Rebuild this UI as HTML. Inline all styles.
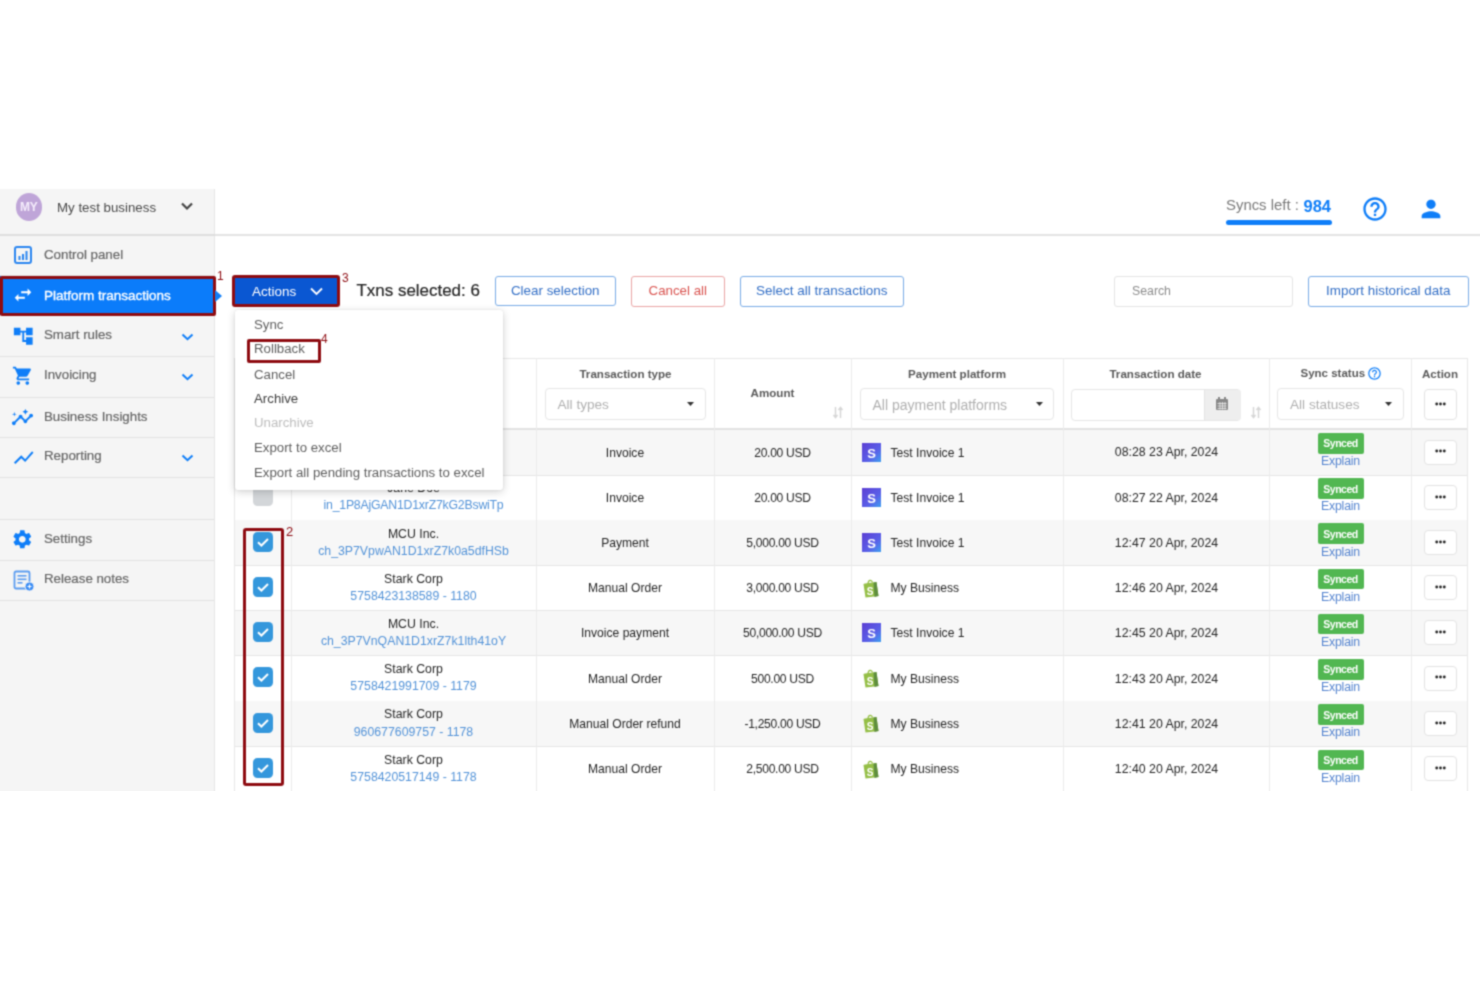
<!DOCTYPE html>
<html><head><meta charset="utf-8"><title>Platform transactions</title>
<style>
html,body{margin:0;padding:0;background:#fff;}
body{width:1480px;height:987px;position:relative;overflow:hidden;font-family:"Liberation Sans", sans-serif;}
#clip{position:absolute;left:0;top:0;width:1480px;height:790.6px;overflow:hidden;filter:url(#sb);background:#fff;}
.t{position:absolute;white-space:nowrap;line-height:1;}
.b{position:absolute;}
svg.b{overflow:visible;}
</style></head><body><svg width="0" height="0" style="position:absolute"><filter id="sb" x="0" y="0" width="100%" height="100%" color-interpolation-filters="sRGB"><feConvolveMatrix order="3" kernelMatrix="0.04 0.12 0.04 0.12 0.36 0.12 0.04 0.12 0.04" edgeMode="duplicate"/></filter></svg><div id="clip">
<div class="b" style="left:0px;top:188.5px;width:215px;height:602.5px;background:#f5f5f5;border-right:1px solid #e6e6e6;box-sizing:border-box"></div>
<div class="b" style="left:0px;top:234px;width:215px;height:1.5px;background:#dedede"></div>
<div class="b" style="left:215px;top:234px;width:1265px;height:1.5px;background:#e3e3e3"></div>
<div class="b" style="left:15.5px;top:193.2px;width:26.5px;height:27.600000000000023px;background:#bfa5d8;border-radius:50%"></div>
<div class="t" style="left:-271.2px;width:600px;text-align:center;top:200.84px;font-size:12px;color:#f4ecfb;font-weight:700;letter-spacing:-0.3px">MY</div>
<div class="t" style="left:57px;top:200.64px;font-size:13.3px;color:#4a4a4a;font-weight:400;">My test business</div>
<svg class="b" style="left:180px;top:201px" width="14" height="10" viewBox="0 0 14 10"><path d="M2 2.5 L7 7.5 L12 2.5" fill="none" stroke="#444" stroke-width="2.2"/></svg>
<div class="b" style="left:0px;top:274.5px;width:214px;height:1.0px;background:#e2e2e2"></div>
<div class="b" style="left:0px;top:315.0px;width:214px;height:1.0px;background:#e2e2e2"></div>
<div class="b" style="left:0px;top:355.5px;width:214px;height:1.0px;background:#e2e2e2"></div>
<div class="b" style="left:0px;top:396.5px;width:214px;height:1.0px;background:#e2e2e2"></div>
<div class="b" style="left:0px;top:436.5px;width:214px;height:1.0px;background:#e2e2e2"></div>
<div class="b" style="left:0px;top:477.0px;width:214px;height:1.0px;background:#e2e2e2"></div>
<div class="b" style="left:0px;top:518.5px;width:214px;height:1.0px;background:#e2e2e2"></div>
<div class="b" style="left:0px;top:559.5px;width:214px;height:1.0px;background:#e2e2e2"></div>
<div class="b" style="left:0px;top:599.5px;width:214px;height:1.0px;background:#e2e2e2"></div>
<div class="b" style="left:0px;top:276px;width:214px;height:39px;background:#0b7cfa"></div>
<div class="b" style="left:0px;top:275.5px;width:216px;height:40.19999999999999px;border:3px solid #8e0c12;border-radius:2px;box-sizing:border-box"></div>
<div class="t" style="left:217px;top:270.34px;font-size:12px;color:#8e0c12;font-weight:400;">1</div>
<svg class="b" style="left:215px;top:290px" width="8" height="12" viewBox="0 0 8 12"><path d="M0 0 L7 6 L0 12z" fill="#0f7ef8"/></svg>
<div class="t" style="left:44px;top:248.24px;font-size:13.3px;color:#666;font-weight:400;-webkit-text-stroke:0.2px #666">Control panel</div>
<div class="t" style="left:44px;top:288.87px;font-size:13.5px;color:#fff;font-weight:400;-webkit-text-stroke:0.35px #fff">Platform transactions</div>
<div class="t" style="left:44px;top:328.24px;font-size:13.3px;color:#666;font-weight:400;-webkit-text-stroke:0.2px #666">Smart rules</div>
<div class="t" style="left:44px;top:368.44px;font-size:13.3px;color:#666;font-weight:400;-webkit-text-stroke:0.2px #666">Invoicing</div>
<div class="t" style="left:44px;top:410.04px;font-size:13.3px;color:#666;font-weight:400;-webkit-text-stroke:0.2px #666">Business Insights</div>
<div class="t" style="left:44px;top:449.44px;font-size:13.3px;color:#666;font-weight:400;-webkit-text-stroke:0.2px #666">Reporting</div>
<div class="t" style="left:44px;top:532.34px;font-size:13.3px;color:#666;font-weight:400;-webkit-text-stroke:0.2px #666">Settings</div>
<div class="t" style="left:44px;top:572.44px;font-size:13.3px;color:#666;font-weight:400;-webkit-text-stroke:0.2px #666">Release notes</div>
<svg class="b" style="left:13px;top:245px" width="20" height="20" viewBox="0 0 20 20"><rect x="2" y="2" width="16" height="16" rx="2" fill="none" stroke="#2b86f0" stroke-width="2"/><rect x="5.5" y="11" width="2" height="4" fill="#2b86f0"/><rect x="9" y="9" width="2" height="6" fill="#2b86f0"/><rect x="12.5" y="6" width="2" height="9" fill="#2b86f0"/></svg>
<svg class="b" style="left:12px;top:284px" width="22" height="22" viewBox="0 0 24 24"><path d="M6.99 11L3 15l3.99 4v-3H14v-2H6.99v-3zM21 9l-3.99-4v3H10v2h7.01v3L21 9z" fill="#fff"/></svg>
<svg class="b" style="left:12px;top:325px" width="22.5" height="22.5" viewBox="0 0 24 24"><path d="M22 11V3h-7v3H9V3H2v8h7V8h2v10h4v3h7v-8h-7v3h-2V8h2v3z" fill="#0f7ef8"/></svg>
<svg class="b" style="left:12px;top:365px" width="21.6" height="21.6" viewBox="0 0 24 24"><path d="M7 18c-1.1 0-1.99.9-1.99 2S5.9 22 7 22s2-.9 2-2-.9-2-2-2zM1 2v2h2l3.6 7.59-1.35 2.45c-.16.28-.25.61-.25.96 0 1.1.9 2 2 2h12v-2H7.42c-.14 0-.25-.11-.25-.25l.03-.12.9-1.63h7.45c.75 0 1.41-.41 1.75-1.03l3.58-6.49c.08-.14.12-.31.12-.48 0-.55-.45-1-1-1H5.21l-.94-2H1zm16 16c-1.1 0-1.99.9-1.99 2s.89 2 1.99 2 2-.9 2-2-.9-2-2-2z" fill="#0f7ef8"/></svg>
<svg class="b" style="left:11.1px;top:406.3px" width="23" height="23" viewBox="0 0 24 24"><path d="M21 8c-1.45 0-2.26 1.44-1.93 2.51l-3.55 3.56c-.3-.09-.74-.09-1.04 0l-2.55-2.55C12.27 10.45 11.46 9 10 9c-1.45 0-2.27 1.44-1.93 2.52l-4.56 4.55C2.44 15.74 1 16.55 1 18c0 1.1.9 2 2 2 1.45 0 2.26-1.44 1.93-2.51l4.55-4.56c.3.09.74.09 1.04 0l2.55 2.55C12.73 16.55 13.54 18 15 18c1.45 0 2.27-1.44 1.93-2.52l3.56-3.55c1.07.33 2.51-.48 2.51-1.93 0-1.1-.9-2-2-2z" fill="#0f7ef8"/><path d="M15 9l.94-2.07L18 6l-2.06-.93L15 3l-.92 2.07L12 6l2.08.93zM3.5 11L4 9l2-.5L4 8l-.5-2L3 8l-2 .5L3 9z" fill="#0f7ef8"/></svg>
<svg class="b" style="left:12px;top:445.6px" width="23.4" height="23.4" viewBox="0 0 24 24"><path d="M3.5 18.49l6-6.01 4 4L22 6.92l-1.41-1.41-7.09 7.97-4-4L2 16.99z" fill="#0f7ef8"/></svg>
<svg class="b" style="left:11px;top:528.2px" width="22.6" height="22.6" viewBox="0 0 24 24"><path d="M19.14 12.94c.04-.3.06-.61.06-.94 0-.32-.02-.64-.07-.94l2.03-1.58c.18-.14.23-.41.12-.61l-1.92-3.32c-.12-.22-.37-.29-.59-.22l-2.39.96c-.5-.38-1.03-.7-1.62-.94l-.36-2.54c-.04-.24-.24-.41-.48-.41h-3.84c-.24 0-.43.17-.47.41l-.36 2.54c-.59.24-1.13.57-1.620.94l-2.39-.96c-.22-.08-.47 0-.59.22L2.74 8.87c-.12.21-.08.47.12.61l2.03 1.58c-.05.3-.09.63-.09.94s.02.64.07.94l-2.03 1.58c-.18.14-.23.41-.12.61l1.92 3.32c.12.22.37.29.59.22l2.39-.96c.5.38 1.03.7 1.62.94l.36 2.54c.05.24.24.41.48.41h3.84c.24 0 .44-.17.47-.41l.36-2.54c.59-.24 1.13-.56 1.62-.94l2.39.96c.22.08.47 0 .59-.22l1.92-3.32c.12-.22.07-.47-.12-.61l-2.01-1.58zM12 15.6c-1.98 0-3.6-1.62-3.6-3.6s1.62-3.6 3.6-3.6 3.6 1.62 3.6 3.6-1.62 3.6-3.6 3.6z" fill="#0f7ef8"/></svg>
<svg class="b" style="left:13px;top:570px" width="22" height="22" viewBox="0 0 22 22"><rect x="1.5" y="1.5" width="15" height="17" rx="1.5" fill="none" stroke="#5b9cf0" stroke-width="1.8"/><rect x="4.5" y="5" width="9" height="1.6" fill="#5b9cf0"/><rect x="4.5" y="8.5" width="9" height="1.6" fill="#5b9cf0"/><rect x="4.5" y="12" width="5" height="1.6" fill="#5b9cf0"/><circle cx="16.5" cy="16.5" r="4.5" fill="#3d8ef5" stroke="#f5f5f5" stroke-width="1"/><path d="M14.5 16.5h4M16.5 14.5v4" stroke="#fff" stroke-width="1.2"/></svg>
<svg class="b" style="left:181px;top:333px" width="13" height="8" viewBox="0 0 13 8"><path d="M1.5 1.5 L6.5 6.2 L11.5 1.5" fill="none" stroke="#0f7ef8" stroke-width="2"/></svg>
<svg class="b" style="left:181px;top:372.5px" width="13" height="8" viewBox="0 0 13 8"><path d="M1.5 1.5 L6.5 6.2 L11.5 1.5" fill="none" stroke="#0f7ef8" stroke-width="2"/></svg>
<svg class="b" style="left:181px;top:453.5px" width="13" height="8" viewBox="0 0 13 8"><path d="M1.5 1.5 L6.5 6.2 L11.5 1.5" fill="none" stroke="#0f7ef8" stroke-width="2"/></svg>
<div class="t" style="left:1226px;top:198.39px;font-size:14.9px;color:#7a7a7a;font-weight:400;">Syncs left :</div>
<div class="t" style="left:1303.5px;top:198.03px;font-size:16.5px;color:#0f7ef8;font-weight:700;">984</div>
<div class="b" style="left:1226px;top:220px;width:105.5px;height:4.5px;background:#0f7ef8;border-radius:3px"></div>
<svg class="b" style="left:1360.5px;top:194.8px" width="28" height="28" viewBox="0 0 24 24"><path d="M11 18h2v-2h-2v2zm1-16C6.48 2 2 6.48 2 12s4.48 10 10 10 10-4.48 10-10S17.52 2 12 2zm0 18c-4.41 0-8-3.59-8-8s3.59-8 8-8 8 3.59 8 8-3.59 8-8 8zm0-14c-2.21 0-4 1.79-4 4h2c0-1.1.9-2 2-2s2 .9 2 2c0 2-3 1.75-3 5h2c0-2.25 3-2.5 3-5 0-2.21-1.79-4-4-4z" fill="#0f7ef8"/></svg>
<svg class="b" style="left:1417px;top:194.6px" width="28" height="28" viewBox="0 0 24 24"><path d="M12 12c2.21 0 4-1.79 4-4s-1.79-4-4-4-4 1.79-4 4 1.79 4 4 4zm0 2c-2.67 0-8 1.34-8 4v2h16v-2c0-2.66-5.33-4-8-4z" fill="#0f7ef8"/></svg>
<div class="b" style="left:234px;top:277.3px;width:104.5px;height:28.19999999999999px;background:#0a57d2"></div>
<div class="b" style="left:232px;top:275.3px;width:108.30000000000001px;height:32.0px;border:3px solid #8e0c12;border-radius:3px;box-sizing:border-box"></div>
<div class="t" style="left:252px;top:284.57px;font-size:13.5px;color:#fff;font-weight:400;">Actions</div>
<svg class="b" style="left:309px;top:286px" width="15" height="11" viewBox="0 0 15 11"><path d="M2 2.5 L7.5 8 L13 2.5" fill="none" stroke="#fff" stroke-width="1.8"/></svg>
<div class="t" style="left:342px;top:271.84px;font-size:12px;color:#8e0c12;font-weight:400;">3</div>
<div class="t" style="left:356.5px;top:282.95px;font-size:16.95px;color:#262626;font-weight:400;-webkit-text-stroke:0.2px #262626">Txns selected: 6</div>
<div class="b" style="left:494.5px;top:276px;width:121.5px;height:30px;border:1px solid #7aace6;border-radius:3px;box-sizing:border-box;background:#fff"></div><div class="t" style="left:255.25px;width:600px;text-align:center;top:284.16px;font-size:13.4px;color:#336fc6;font-weight:400;">Clear selection</div>
<div class="b" style="left:631px;top:276px;width:93.5px;height:30.5px;border:1px solid #eaa5a5;border-radius:3px;box-sizing:border-box;background:#fff"></div><div class="t" style="left:377.75px;width:600px;text-align:center;top:284.24px;font-size:13.3px;color:#d9534f;font-weight:400;">Cancel all</div>
<div class="b" style="left:739.5px;top:276px;width:164.5px;height:30.5px;border:1px solid #7aace6;border-radius:3px;box-sizing:border-box;background:#fff"></div><div class="t" style="left:521.75px;width:600px;text-align:center;top:284.07px;font-size:13.5px;color:#336fc6;font-weight:400;">Select all transactions</div>
<div class="b" style="left:1114px;top:276px;width:178.5px;height:30.5px;border:1px solid #e4e4e4;border-radius:3px;box-sizing:border-box;background:#fff"></div>
<div class="t" style="left:1132px;top:285.09px;font-size:12.3px;color:#8c8c8c;font-weight:400;">Search</div>
<div class="b" style="left:1307.5px;top:276px;width:161.5px;height:30.5px;border:1px solid #7aace6;border-radius:3px;box-sizing:border-box;background:#fff"></div><div class="t" style="left:1088.25px;width:600px;text-align:center;top:284.16px;font-size:13.4px;color:#336fc6;font-weight:400;">Import historical data</div>
<div class="b" style="left:234px;top:357.5px;width:1233.5px;height:442.5px;background:#fff;border:1px solid #e8e8e8;box-sizing:border-box"></div>
<div class="b" style="left:234.5px;top:429.8px;width:1232.5px;height:45.21999999999997px;background:#f7f7f7"></div>
<div class="b" style="left:234.5px;top:474.52px;width:1232.5px;height:1.0px;background:#e6e6e6"></div>
<div class="b" style="left:234.5px;top:519.74px;width:1232.5px;height:1.0px;background:#e6e6e6"></div>
<div class="b" style="left:234.5px;top:520.24px;width:1232.5px;height:45.22000000000003px;background:#f7f7f7"></div>
<div class="b" style="left:234.5px;top:564.96px;width:1232.5px;height:1.0px;background:#e6e6e6"></div>
<div class="b" style="left:234.5px;top:610.1800000000001px;width:1232.5px;height:1.0px;background:#e6e6e6"></div>
<div class="b" style="left:234.5px;top:610.6800000000001px;width:1232.5px;height:45.22000000000003px;background:#f7f7f7"></div>
<div class="b" style="left:234.5px;top:655.4000000000001px;width:1232.5px;height:1.0px;background:#e6e6e6"></div>
<div class="b" style="left:234.5px;top:700.62px;width:1232.5px;height:1.0px;background:#e6e6e6"></div>
<div class="b" style="left:234.5px;top:701.12px;width:1232.5px;height:45.22000000000003px;background:#f7f7f7"></div>
<div class="b" style="left:234.5px;top:745.84px;width:1232.5px;height:1.0px;background:#e6e6e6"></div>
<div class="b" style="left:234.5px;top:791.06px;width:1232.5px;height:1.0px;background:#e6e6e6"></div>
<div class="b" style="left:234.5px;top:427.5px;width:1232.5px;height:2.3000000000000114px;background:#e2e2e2"></div>
<div class="b" style="left:290.5px;top:357.5px;width:1.0px;height:442.5px;background:#ebebeb"></div>
<div class="b" style="left:536.0px;top:357.5px;width:1.0px;height:442.5px;background:#ebebeb"></div>
<div class="b" style="left:713.5px;top:357.5px;width:1.0px;height:442.5px;background:#ebebeb"></div>
<div class="b" style="left:850.5px;top:357.5px;width:1.0px;height:442.5px;background:#ebebeb"></div>
<div class="b" style="left:1063.0px;top:357.5px;width:1.0px;height:442.5px;background:#ebebeb"></div>
<div class="b" style="left:1268.5px;top:357.5px;width:1.0px;height:442.5px;background:#ebebeb"></div>
<div class="b" style="left:1410.5px;top:357.5px;width:1.0px;height:442.5px;background:#ebebeb"></div>
<div class="t" style="left:325.5px;width:600px;text-align:center;top:368.38px;font-size:11.6px;color:#5a5a5a;font-weight:700;">Transaction type</div>
<div class="t" style="left:472.5px;width:600px;text-align:center;top:386.98px;font-size:11.6px;color:#5a5a5a;font-weight:700;">Amount</div>
<div class="t" style="left:657px;width:600px;text-align:center;top:368.38px;font-size:11.6px;color:#5a5a5a;font-weight:700;">Payment platform</div>
<div class="t" style="left:855.5px;width:600px;text-align:center;top:368.38px;font-size:11.6px;color:#5a5a5a;font-weight:700;">Transaction date</div>
<div class="t" style="left:1300.5px;top:368.47px;font-size:11.5px;color:#5a5a5a;font-weight:700;">Sync status</div>
<svg class="b" style="left:1367.3px;top:366px" width="15" height="15" viewBox="0 0 24 24"><path d="M11 18h2v-2h-2v2zm1-16C6.48 2 2 6.48 2 12s4.48 10 10 10 10-4.48 10-10S17.52 2 12 2zm0 18c-4.41 0-8-3.59-8-8s3.59-8 8-8 8 3.59 8 8-3.59 8-8 8zm0-14c-2.21 0-4 1.79-4 4h2c0-1.1.9-2 2-2s2 .9 2 2c0 2-3 1.75-3 5h2c0-2.25 3-2.5 3-5 0-2.21-1.79-4-4-4z" fill="#0f7ef8"/></svg>
<div class="t" style="left:1140px;width:600px;text-align:center;top:368.38px;font-size:11.6px;color:#5a5a5a;font-weight:700;">Action</div>
<div class="b" style="left:544.5px;top:388px;width:161.0px;height:32.30000000000001px;border:1px solid #e6e6e6;border-radius:4px;box-sizing:border-box;background:#fff"></div><div class="t" style="left:557.5px;top:398.09px;font-size:13.6px;color:#b0b0b0;font-weight:400;">All types</div><svg class="b" style="left:687.0px;top:401.8px" width="7" height="4.5" viewBox="0 0 7 4.5"><path d="M0 0 L7 0 L3.5 4z" fill="#333"/></svg>
<div class="b" style="left:859.5px;top:388px;width:194.5px;height:32.30000000000001px;border:1px solid #e6e6e6;border-radius:4px;box-sizing:border-box;background:#fff"></div><div class="t" style="left:872.5px;top:397.75px;font-size:14px;color:#b0b0b0;font-weight:400;">All payment platforms</div><svg class="b" style="left:1035.5px;top:401.8px" width="7" height="4.5" viewBox="0 0 7 4.5"><path d="M0 0 L7 0 L3.5 4z" fill="#333"/></svg>
<div class="b" style="left:1277px;top:388px;width:126.5px;height:32.30000000000001px;border:1px solid #e6e6e6;border-radius:4px;box-sizing:border-box;background:#fff"></div><div class="t" style="left:1290px;top:398.09px;font-size:13.6px;color:#b0b0b0;font-weight:400;">All statuses</div><svg class="b" style="left:1385.0px;top:401.8px" width="7" height="4.5" viewBox="0 0 7 4.5"><path d="M0 0 L7 0 L3.5 4z" fill="#333"/></svg>
<div class="b" style="left:1071px;top:388.5px;width:169.5px;height:32.0px;border:1px solid #e6e6e6;border-radius:4px;box-sizing:border-box;background:#fff;overflow:hidden"></div>
<div class="b" style="left:1204px;top:389.5px;width:35.5px;height:30.0px;background:#eeeeee;border-left:1px solid #e3e3e3;border-radius:0 3px 3px 0"></div>
<svg class="b" style="left:1215px;top:396px" width="14" height="15" viewBox="0 0 14 15"><rect x="1" y="3" width="12" height="11" rx="1" fill="#888"/><rect x="3" y="1" width="2" height="3" fill="#888"/><rect x="9" y="1" width="2" height="3" fill="#888"/><path d="M2.5 7.5h9M2.5 10h9M2.5 12.5h9M5 6v7.5M7.5 6v7.5M10 6v7.5" stroke="#eee" stroke-width="0.8"/></svg>
<svg class="b" style="left:832px;top:406px" width="12" height="13" viewBox="0 0 12 13"><path d="M3.5 1v10M1.5 9l2 2.5 2-2.5M8.5 12V2M6.5 4l2-2.5 2 2.5" fill="none" stroke="#d6d6d6" stroke-width="1.5"/></svg>
<svg class="b" style="left:1249.5px;top:406px" width="12" height="13" viewBox="0 0 12 13"><path d="M3.5 1v10M1.5 9l2 2.5 2-2.5M8.5 12V2M6.5 4l2-2.5 2 2.5" fill="none" stroke="#d6d6d6" stroke-width="1.5"/></svg>
<div class="b" style="left:1423.5px;top:389.0px;width:33.0px;height:31.0px;border:1px solid #e3e3e3;border-radius:4px;box-sizing:border-box;background:#fff"></div><svg class="b" style="left:1434.5px;top:401.8px" width="11" height="4" viewBox="0 0 11 4"><circle cx="1.7" cy="2" r="1.4" fill="#222"/><circle cx="5.5" cy="2" r="1.4" fill="#222"/><circle cx="9.3" cy="2" r="1.4" fill="#222"/></svg>
<div class="t" style="left:325px;width:600px;text-align:center;top:446.57px;font-size:12.1px;color:#262626;font-weight:400;">Invoice</div>
<div class="t" style="left:482.5px;width:600px;text-align:center;top:446.57px;font-size:12.1px;color:#262626;font-weight:400;letter-spacing:-0.3px">20.00 USD</div>
<svg class="b" style="left:861.5px;top:442.51000000000005px" width="19" height="19" viewBox="0 0 19 19"><defs><linearGradient id="sg" x1="0" y1="0" x2="1" y2="1"><stop offset="0" stop-color="#5d3fd3"/><stop offset="0.6" stop-color="#5a5fe8"/><stop offset="1" stop-color="#3fa0f0"/></linearGradient></defs><rect width="19" height="19" fill="url(#sg)"/><text x="9.5" y="14.5" text-anchor="middle" font-family="Liberation Sans" font-weight="700" font-size="13" fill="#fff">S</text></svg>
<div class="t" style="left:890.5px;top:446.57px;font-size:12.1px;color:#262626;font-weight:400;">Test Invoice 1</div>
<div class="t" style="left:866.5px;width:600px;text-align:center;top:446.40px;font-size:12.3px;color:#262626;font-weight:400;">08:28 23 Apr, 2024</div>
<div class="b" style="left:1317.5px;top:433.01000000000005px;width:46.0px;height:20.5px;background:#52b752;border-radius:2px"></div>
<div class="t" style="left:1040.5px;width:600px;text-align:center;top:438.32px;font-size:10.5px;color:#fff;font-weight:700;letter-spacing:-0.5px">Synced</div>
<div class="t" style="left:1040.5px;width:600px;text-align:center;top:455.10px;font-size:12.3px;color:#5685d0;font-weight:400;letter-spacing:-0.2px">Explain</div>
<div class="b" style="left:1423.5px;top:439.51000000000005px;width:33.0px;height:25.0px;border:1px solid #e3e3e3;border-radius:4px;box-sizing:border-box;background:#fff"></div><svg class="b" style="left:1434.5px;top:449.31000000000006px" width="11" height="4" viewBox="0 0 11 4"><circle cx="1.7" cy="2" r="1.4" fill="#222"/><circle cx="5.5" cy="2" r="1.4" fill="#222"/><circle cx="9.3" cy="2" r="1.4" fill="#222"/></svg>
<div class="b" style="left:252.5px;top:485.73px;width:20.0px;height:20.0px;background:#d3d6d9;border-radius:4.5px"></div>
<div class="t" style="left:113.5px;width:600px;text-align:center;top:482.32px;font-size:12.3px;color:#262626;font-weight:400;">Jane Doe</div>
<div class="t" style="left:113.5px;width:600px;text-align:center;top:499.42px;font-size:12.3px;color:#5393d8;font-weight:400;letter-spacing:-0.22px">in_1P8AjGAN1D1xrZ7kG2BswiTp</div>
<div class="t" style="left:325px;width:600px;text-align:center;top:491.79px;font-size:12.1px;color:#262626;font-weight:400;">Invoice</div>
<div class="t" style="left:482.5px;width:600px;text-align:center;top:491.79px;font-size:12.1px;color:#262626;font-weight:400;letter-spacing:-0.3px">20.00 USD</div>
<svg class="b" style="left:861.5px;top:487.73px" width="19" height="19" viewBox="0 0 19 19"><defs><linearGradient id="sg" x1="0" y1="0" x2="1" y2="1"><stop offset="0" stop-color="#5d3fd3"/><stop offset="0.6" stop-color="#5a5fe8"/><stop offset="1" stop-color="#3fa0f0"/></linearGradient></defs><rect width="19" height="19" fill="url(#sg)"/><text x="9.5" y="14.5" text-anchor="middle" font-family="Liberation Sans" font-weight="700" font-size="13" fill="#fff">S</text></svg>
<div class="t" style="left:890.5px;top:491.79px;font-size:12.1px;color:#262626;font-weight:400;">Test Invoice 1</div>
<div class="t" style="left:866.5px;width:600px;text-align:center;top:491.62px;font-size:12.3px;color:#262626;font-weight:400;">08:27 22 Apr, 2024</div>
<div class="b" style="left:1317.5px;top:478.23px;width:46.0px;height:20.5px;background:#52b752;border-radius:2px"></div>
<div class="t" style="left:1040.5px;width:600px;text-align:center;top:483.54px;font-size:10.5px;color:#fff;font-weight:700;letter-spacing:-0.5px">Synced</div>
<div class="t" style="left:1040.5px;width:600px;text-align:center;top:500.32px;font-size:12.3px;color:#5685d0;font-weight:400;letter-spacing:-0.2px">Explain</div>
<div class="b" style="left:1423.5px;top:484.73px;width:33.0px;height:25.0px;border:1px solid #e3e3e3;border-radius:4px;box-sizing:border-box;background:#fff"></div><svg class="b" style="left:1434.5px;top:494.53000000000003px" width="11" height="4" viewBox="0 0 11 4"><circle cx="1.7" cy="2" r="1.4" fill="#222"/><circle cx="5.5" cy="2" r="1.4" fill="#222"/><circle cx="9.3" cy="2" r="1.4" fill="#222"/></svg>
<svg class="b" style="left:252.7px;top:531.75px" width="20" height="20" viewBox="0 0 20 20"><rect width="20" height="20" rx="4.5" fill="#3497dc"/><path d="M5 10.3 L8.4 13.5 L15 7" fill="none" stroke="#fff" stroke-width="2"/></svg>
<div class="t" style="left:113.5px;width:600px;text-align:center;top:527.54px;font-size:12.3px;color:#262626;font-weight:400;">MCU Inc.</div>
<div class="t" style="left:113.5px;width:600px;text-align:center;top:544.64px;font-size:12.3px;color:#5393d8;font-weight:400;">ch_3P7VpwAN1D1xrZ7k0a5dfHSb</div>
<div class="t" style="left:325px;width:600px;text-align:center;top:537.01px;font-size:12.1px;color:#262626;font-weight:400;">Payment</div>
<div class="t" style="left:482.5px;width:600px;text-align:center;top:537.01px;font-size:12.1px;color:#262626;font-weight:400;letter-spacing:-0.3px">5,000.00 USD</div>
<svg class="b" style="left:861.5px;top:532.95px" width="19" height="19" viewBox="0 0 19 19"><defs><linearGradient id="sg" x1="0" y1="0" x2="1" y2="1"><stop offset="0" stop-color="#5d3fd3"/><stop offset="0.6" stop-color="#5a5fe8"/><stop offset="1" stop-color="#3fa0f0"/></linearGradient></defs><rect width="19" height="19" fill="url(#sg)"/><text x="9.5" y="14.5" text-anchor="middle" font-family="Liberation Sans" font-weight="700" font-size="13" fill="#fff">S</text></svg>
<div class="t" style="left:890.5px;top:537.01px;font-size:12.1px;color:#262626;font-weight:400;">Test Invoice 1</div>
<div class="t" style="left:866.5px;width:600px;text-align:center;top:536.84px;font-size:12.3px;color:#262626;font-weight:400;">12:47 20 Apr, 2024</div>
<div class="b" style="left:1317.5px;top:523.45px;width:46.0px;height:20.5px;background:#52b752;border-radius:2px"></div>
<div class="t" style="left:1040.5px;width:600px;text-align:center;top:528.76px;font-size:10.5px;color:#fff;font-weight:700;letter-spacing:-0.5px">Synced</div>
<div class="t" style="left:1040.5px;width:600px;text-align:center;top:545.54px;font-size:12.3px;color:#5685d0;font-weight:400;letter-spacing:-0.2px">Explain</div>
<div class="b" style="left:1423.5px;top:529.95px;width:33.0px;height:25.0px;border:1px solid #e3e3e3;border-radius:4px;box-sizing:border-box;background:#fff"></div><svg class="b" style="left:1434.5px;top:539.75px" width="11" height="4" viewBox="0 0 11 4"><circle cx="1.7" cy="2" r="1.4" fill="#222"/><circle cx="5.5" cy="2" r="1.4" fill="#222"/><circle cx="9.3" cy="2" r="1.4" fill="#222"/></svg>
<svg class="b" style="left:252.7px;top:576.97px" width="20" height="20" viewBox="0 0 20 20"><rect width="20" height="20" rx="4.5" fill="#3497dc"/><path d="M5 10.3 L8.4 13.5 L15 7" fill="none" stroke="#fff" stroke-width="2"/></svg>
<div class="t" style="left:113.5px;width:600px;text-align:center;top:572.76px;font-size:12.3px;color:#262626;font-weight:400;">Stark Corp</div>
<div class="t" style="left:113.5px;width:600px;text-align:center;top:589.86px;font-size:12.3px;color:#5393d8;font-weight:400;">5758423138589 - 1180</div>
<div class="t" style="left:325px;width:600px;text-align:center;top:582.23px;font-size:12.1px;color:#262626;font-weight:400;">Manual Order</div>
<div class="t" style="left:482.5px;width:600px;text-align:center;top:582.23px;font-size:12.1px;color:#262626;font-weight:400;letter-spacing:-0.3px">3,000.00 USD</div>
<svg class="b" style="left:861.5px;top:577.6700000000001px" width="19" height="20" viewBox="0 0 19 20"><path d="M3 5.5 L14.5 4 L16.5 18 L3.5 19.5 L1.5 6z" fill="#95bf47"/><path d="M11.5 4.4 L14.5 4 L16.5 18 L12.5 19z" fill="#5e8e3e"/><path d="M6 6 C6 2 9.5 1 10.5 4.5" fill="none" stroke="#95bf47" stroke-width="1.3"/><text x="8" y="16.5" text-anchor="middle" font-family="Liberation Sans" font-weight="700" font-size="10" fill="#fff">S</text></svg>
<div class="t" style="left:890.5px;top:582.23px;font-size:12.1px;color:#262626;font-weight:400;">My Business</div>
<div class="t" style="left:866.5px;width:600px;text-align:center;top:582.06px;font-size:12.3px;color:#262626;font-weight:400;">12:46 20 Apr, 2024</div>
<div class="b" style="left:1317.5px;top:568.6700000000001px;width:46.0px;height:20.5px;background:#52b752;border-radius:2px"></div>
<div class="t" style="left:1040.5px;width:600px;text-align:center;top:573.98px;font-size:10.5px;color:#fff;font-weight:700;letter-spacing:-0.5px">Synced</div>
<div class="t" style="left:1040.5px;width:600px;text-align:center;top:590.76px;font-size:12.3px;color:#5685d0;font-weight:400;letter-spacing:-0.2px">Explain</div>
<div class="b" style="left:1423.5px;top:575.1700000000001px;width:33.0px;height:25.0px;border:1px solid #e3e3e3;border-radius:4px;box-sizing:border-box;background:#fff"></div><svg class="b" style="left:1434.5px;top:584.97px" width="11" height="4" viewBox="0 0 11 4"><circle cx="1.7" cy="2" r="1.4" fill="#222"/><circle cx="5.5" cy="2" r="1.4" fill="#222"/><circle cx="9.3" cy="2" r="1.4" fill="#222"/></svg>
<svg class="b" style="left:252.7px;top:622.19px" width="20" height="20" viewBox="0 0 20 20"><rect width="20" height="20" rx="4.5" fill="#3497dc"/><path d="M5 10.3 L8.4 13.5 L15 7" fill="none" stroke="#fff" stroke-width="2"/></svg>
<div class="t" style="left:113.5px;width:600px;text-align:center;top:617.98px;font-size:12.3px;color:#262626;font-weight:400;">MCU Inc.</div>
<div class="t" style="left:113.5px;width:600px;text-align:center;top:635.08px;font-size:12.3px;color:#5393d8;font-weight:400;">ch_3P7VnQAN1D1xrZ7k1lth41oY</div>
<div class="t" style="left:325px;width:600px;text-align:center;top:627.45px;font-size:12.1px;color:#262626;font-weight:400;">Invoice payment</div>
<div class="t" style="left:482.5px;width:600px;text-align:center;top:627.45px;font-size:12.1px;color:#262626;font-weight:400;letter-spacing:-0.3px">50,000.00 USD</div>
<svg class="b" style="left:861.5px;top:623.3900000000001px" width="19" height="19" viewBox="0 0 19 19"><defs><linearGradient id="sg" x1="0" y1="0" x2="1" y2="1"><stop offset="0" stop-color="#5d3fd3"/><stop offset="0.6" stop-color="#5a5fe8"/><stop offset="1" stop-color="#3fa0f0"/></linearGradient></defs><rect width="19" height="19" fill="url(#sg)"/><text x="9.5" y="14.5" text-anchor="middle" font-family="Liberation Sans" font-weight="700" font-size="13" fill="#fff">S</text></svg>
<div class="t" style="left:890.5px;top:627.45px;font-size:12.1px;color:#262626;font-weight:400;">Test Invoice 1</div>
<div class="t" style="left:866.5px;width:600px;text-align:center;top:627.28px;font-size:12.3px;color:#262626;font-weight:400;">12:45 20 Apr, 2024</div>
<div class="b" style="left:1317.5px;top:613.8900000000001px;width:46.0px;height:20.5px;background:#52b752;border-radius:2px"></div>
<div class="t" style="left:1040.5px;width:600px;text-align:center;top:619.20px;font-size:10.5px;color:#fff;font-weight:700;letter-spacing:-0.5px">Synced</div>
<div class="t" style="left:1040.5px;width:600px;text-align:center;top:635.98px;font-size:12.3px;color:#5685d0;font-weight:400;letter-spacing:-0.2px">Explain</div>
<div class="b" style="left:1423.5px;top:620.3900000000001px;width:33.0px;height:25.0px;border:1px solid #e3e3e3;border-radius:4px;box-sizing:border-box;background:#fff"></div><svg class="b" style="left:1434.5px;top:630.19px" width="11" height="4" viewBox="0 0 11 4"><circle cx="1.7" cy="2" r="1.4" fill="#222"/><circle cx="5.5" cy="2" r="1.4" fill="#222"/><circle cx="9.3" cy="2" r="1.4" fill="#222"/></svg>
<svg class="b" style="left:252.7px;top:667.41px" width="20" height="20" viewBox="0 0 20 20"><rect width="20" height="20" rx="4.5" fill="#3497dc"/><path d="M5 10.3 L8.4 13.5 L15 7" fill="none" stroke="#fff" stroke-width="2"/></svg>
<div class="t" style="left:113.5px;width:600px;text-align:center;top:663.20px;font-size:12.3px;color:#262626;font-weight:400;">Stark Corp</div>
<div class="t" style="left:113.5px;width:600px;text-align:center;top:680.30px;font-size:12.3px;color:#5393d8;font-weight:400;">5758421991709 - 1179</div>
<div class="t" style="left:325px;width:600px;text-align:center;top:672.67px;font-size:12.1px;color:#262626;font-weight:400;">Manual Order</div>
<div class="t" style="left:482.5px;width:600px;text-align:center;top:672.67px;font-size:12.1px;color:#262626;font-weight:400;letter-spacing:-0.3px">500.00 USD</div>
<svg class="b" style="left:861.5px;top:668.11px" width="19" height="20" viewBox="0 0 19 20"><path d="M3 5.5 L14.5 4 L16.5 18 L3.5 19.5 L1.5 6z" fill="#95bf47"/><path d="M11.5 4.4 L14.5 4 L16.5 18 L12.5 19z" fill="#5e8e3e"/><path d="M6 6 C6 2 9.5 1 10.5 4.5" fill="none" stroke="#95bf47" stroke-width="1.3"/><text x="8" y="16.5" text-anchor="middle" font-family="Liberation Sans" font-weight="700" font-size="10" fill="#fff">S</text></svg>
<div class="t" style="left:890.5px;top:672.67px;font-size:12.1px;color:#262626;font-weight:400;">My Business</div>
<div class="t" style="left:866.5px;width:600px;text-align:center;top:672.50px;font-size:12.3px;color:#262626;font-weight:400;">12:43 20 Apr, 2024</div>
<div class="b" style="left:1317.5px;top:659.11px;width:46.0px;height:20.5px;background:#52b752;border-radius:2px"></div>
<div class="t" style="left:1040.5px;width:600px;text-align:center;top:664.42px;font-size:10.5px;color:#fff;font-weight:700;letter-spacing:-0.5px">Synced</div>
<div class="t" style="left:1040.5px;width:600px;text-align:center;top:681.20px;font-size:12.3px;color:#5685d0;font-weight:400;letter-spacing:-0.2px">Explain</div>
<div class="b" style="left:1423.5px;top:665.61px;width:33.0px;height:25.0px;border:1px solid #e3e3e3;border-radius:4px;box-sizing:border-box;background:#fff"></div><svg class="b" style="left:1434.5px;top:675.41px" width="11" height="4" viewBox="0 0 11 4"><circle cx="1.7" cy="2" r="1.4" fill="#222"/><circle cx="5.5" cy="2" r="1.4" fill="#222"/><circle cx="9.3" cy="2" r="1.4" fill="#222"/></svg>
<svg class="b" style="left:252.7px;top:712.63px" width="20" height="20" viewBox="0 0 20 20"><rect width="20" height="20" rx="4.5" fill="#3497dc"/><path d="M5 10.3 L8.4 13.5 L15 7" fill="none" stroke="#fff" stroke-width="2"/></svg>
<div class="t" style="left:113.5px;width:600px;text-align:center;top:708.42px;font-size:12.3px;color:#262626;font-weight:400;">Stark Corp</div>
<div class="t" style="left:113.5px;width:600px;text-align:center;top:725.52px;font-size:12.3px;color:#5393d8;font-weight:400;">960677609757 - 1178</div>
<div class="t" style="left:325px;width:600px;text-align:center;top:717.89px;font-size:12.1px;color:#262626;font-weight:400;">Manual Order refund</div>
<div class="t" style="left:482.5px;width:600px;text-align:center;top:717.89px;font-size:12.1px;color:#262626;font-weight:400;letter-spacing:-0.3px">-1,250.00 USD</div>
<svg class="b" style="left:861.5px;top:713.33px" width="19" height="20" viewBox="0 0 19 20"><path d="M3 5.5 L14.5 4 L16.5 18 L3.5 19.5 L1.5 6z" fill="#95bf47"/><path d="M11.5 4.4 L14.5 4 L16.5 18 L12.5 19z" fill="#5e8e3e"/><path d="M6 6 C6 2 9.5 1 10.5 4.5" fill="none" stroke="#95bf47" stroke-width="1.3"/><text x="8" y="16.5" text-anchor="middle" font-family="Liberation Sans" font-weight="700" font-size="10" fill="#fff">S</text></svg>
<div class="t" style="left:890.5px;top:717.89px;font-size:12.1px;color:#262626;font-weight:400;">My Business</div>
<div class="t" style="left:866.5px;width:600px;text-align:center;top:717.72px;font-size:12.3px;color:#262626;font-weight:400;">12:41 20 Apr, 2024</div>
<div class="b" style="left:1317.5px;top:704.33px;width:46.0px;height:20.5px;background:#52b752;border-radius:2px"></div>
<div class="t" style="left:1040.5px;width:600px;text-align:center;top:709.64px;font-size:10.5px;color:#fff;font-weight:700;letter-spacing:-0.5px">Synced</div>
<div class="t" style="left:1040.5px;width:600px;text-align:center;top:726.42px;font-size:12.3px;color:#5685d0;font-weight:400;letter-spacing:-0.2px">Explain</div>
<div class="b" style="left:1423.5px;top:710.83px;width:33.0px;height:25.0px;border:1px solid #e3e3e3;border-radius:4px;box-sizing:border-box;background:#fff"></div><svg class="b" style="left:1434.5px;top:720.63px" width="11" height="4" viewBox="0 0 11 4"><circle cx="1.7" cy="2" r="1.4" fill="#222"/><circle cx="5.5" cy="2" r="1.4" fill="#222"/><circle cx="9.3" cy="2" r="1.4" fill="#222"/></svg>
<svg class="b" style="left:252.7px;top:757.8499999999999px" width="20" height="20" viewBox="0 0 20 20"><rect width="20" height="20" rx="4.5" fill="#3497dc"/><path d="M5 10.3 L8.4 13.5 L15 7" fill="none" stroke="#fff" stroke-width="2"/></svg>
<div class="t" style="left:113.5px;width:600px;text-align:center;top:753.64px;font-size:12.3px;color:#262626;font-weight:400;">Stark Corp</div>
<div class="t" style="left:113.5px;width:600px;text-align:center;top:770.74px;font-size:12.3px;color:#5393d8;font-weight:400;">5758420517149 - 1178</div>
<div class="t" style="left:325px;width:600px;text-align:center;top:763.11px;font-size:12.1px;color:#262626;font-weight:400;">Manual Order</div>
<div class="t" style="left:482.5px;width:600px;text-align:center;top:763.11px;font-size:12.1px;color:#262626;font-weight:400;letter-spacing:-0.3px">2,500.00 USD</div>
<svg class="b" style="left:861.5px;top:758.55px" width="19" height="20" viewBox="0 0 19 20"><path d="M3 5.5 L14.5 4 L16.5 18 L3.5 19.5 L1.5 6z" fill="#95bf47"/><path d="M11.5 4.4 L14.5 4 L16.5 18 L12.5 19z" fill="#5e8e3e"/><path d="M6 6 C6 2 9.5 1 10.5 4.5" fill="none" stroke="#95bf47" stroke-width="1.3"/><text x="8" y="16.5" text-anchor="middle" font-family="Liberation Sans" font-weight="700" font-size="10" fill="#fff">S</text></svg>
<div class="t" style="left:890.5px;top:763.11px;font-size:12.1px;color:#262626;font-weight:400;">My Business</div>
<div class="t" style="left:866.5px;width:600px;text-align:center;top:762.94px;font-size:12.3px;color:#262626;font-weight:400;">12:40 20 Apr, 2024</div>
<div class="b" style="left:1317.5px;top:749.55px;width:46.0px;height:20.5px;background:#52b752;border-radius:2px"></div>
<div class="t" style="left:1040.5px;width:600px;text-align:center;top:754.86px;font-size:10.5px;color:#fff;font-weight:700;letter-spacing:-0.5px">Synced</div>
<div class="t" style="left:1040.5px;width:600px;text-align:center;top:771.64px;font-size:12.3px;color:#5685d0;font-weight:400;letter-spacing:-0.2px">Explain</div>
<div class="b" style="left:1423.5px;top:756.05px;width:33.0px;height:25.0px;border:1px solid #e3e3e3;border-radius:4px;box-sizing:border-box;background:#fff"></div><svg class="b" style="left:1434.5px;top:765.8499999999999px" width="11" height="4" viewBox="0 0 11 4"><circle cx="1.7" cy="2" r="1.4" fill="#222"/><circle cx="5.5" cy="2" r="1.4" fill="#222"/><circle cx="9.3" cy="2" r="1.4" fill="#222"/></svg>
<div class="b" style="left:243.4px;top:527.6px;width:40.599999999999994px;height:258.9px;border:3px solid #8e0c12;border-radius:3px;box-sizing:border-box"></div>
<div class="t" style="left:286px;top:525.20px;font-size:13px;color:#8e0c12;font-weight:400;">2</div>
<div class="b" style="left:234.5px;top:309.5px;width:268.5px;height:180.2px;background:#fff;border-radius:3px;box-shadow:0 2px 8px rgba(0,0,0,0.18), 0 0 2px rgba(0,0,0,0.1)"></div>
<div class="t" style="left:254px;top:317.88px;font-size:13.25px;color:#5e5e5e;font-weight:400;">Sync</div>
<div class="t" style="left:254px;top:342.48px;font-size:13.25px;color:#5e5e5e;font-weight:400;">Rollback</div>
<div class="t" style="left:254px;top:367.78px;font-size:13.25px;color:#5e5e5e;font-weight:400;">Cancel</div>
<div class="t" style="left:254px;top:392.08px;font-size:13.25px;color:#3e3e3e;font-weight:400;">Archive</div>
<div class="t" style="left:254px;top:416.38px;font-size:13.25px;color:#bdbdbd;font-weight:400;">Unarchive</div>
<div class="t" style="left:254px;top:440.98px;font-size:13.25px;color:#5e5e5e;font-weight:400;">Export to excel</div>
<div class="t" style="left:254px;top:465.58px;font-size:13.25px;color:#5e5e5e;font-weight:400;">Export all pending transactions to excel</div>
<div class="b" style="left:246.5px;top:339px;width:74.0px;height:24.30000000000001px;border:3px solid #8e0c12;border-radius:2px;box-sizing:border-box"></div>
<div class="t" style="left:321px;top:332.84px;font-size:12px;color:#8e0c12;font-weight:400;">4</div>
</div></body></html>
